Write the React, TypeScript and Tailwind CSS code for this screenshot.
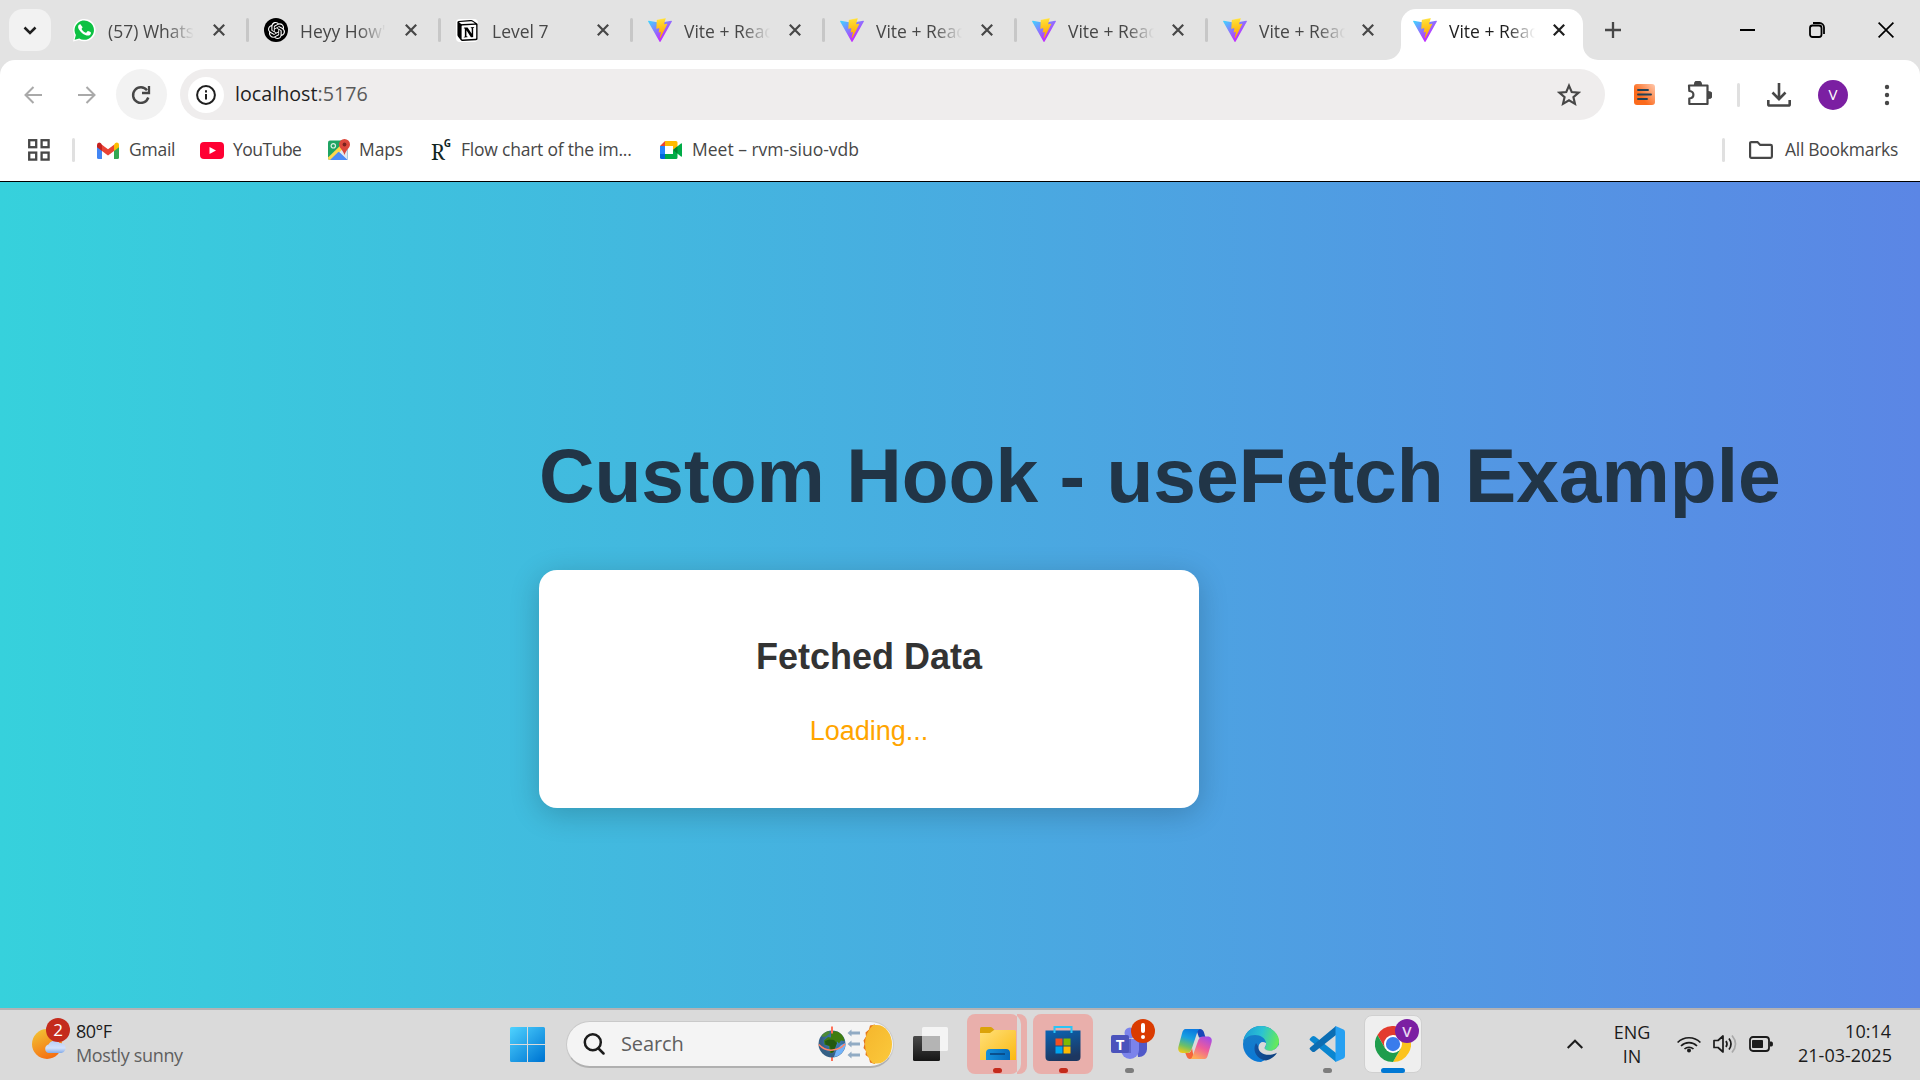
import React from "react";
import { SiOpenai, SiNotion } from "react-icons/si";

const ViteLogo = ({ id }: { id: string }) => (
  <svg viewBox="0 0 256 257" className="h-6 w-6 shrink-0">
    <defs>
      <linearGradient id={id + "a"} x1="-.828%" x2="57.636%" y1="7.652%" y2="78.411%">
        <stop offset="0%" stopColor="#41D1FF" />
        <stop offset="100%" stopColor="#BD34FE" />
      </linearGradient>
      <linearGradient id={id + "b"} x1="43.376%" x2="50.316%" y1="2.242%" y2="89.03%">
        <stop offset="0%" stopColor="#FFEA83" />
        <stop offset="8.333%" stopColor="#FFDD35" />
        <stop offset="100%" stopColor="#FFA800" />
      </linearGradient>
    </defs>
    <path fill={`url(#${id}a)`} d="M255.153 37.938L134.897 252.976c-2.483 4.44-8.862 4.466-11.382.048L.875 37.958c-2.746-4.814 1.371-10.646 6.827-9.67l120.385 21.517a6.537 6.537 0 0 0 2.322-.004l117.867-21.483c5.438-.991 9.574 4.796 6.877 9.62Z" />
    <path fill={`url(#${id}b)`} d="M185.432.063L96.44 17.501a3.268 3.268 0 0 0-2.634 3.014l-5.474 92.456a3.268 3.268 0 0 0 3.997 3.378l24.777-5.718c2.318-.535 4.413 1.507 3.936 3.838l-7.361 36.047c-.495 2.426 1.782 4.5 4.151 3.78l15.304-4.649c2.372-.72 4.652 1.36 4.15 3.788l-11.698 56.621c-.732 3.542 3.979 5.473 5.943 2.437l1.313-2.028l72.516-144.72c1.215-2.423-.88-5.186-3.54-4.672l-25.505 4.922c-2.396.462-4.435-1.77-3.759-4.114l16.646-57.705c.677-2.35-1.37-4.583-3.769-4.113Z" />
  </svg>
);

const CloseX = () => (
  <svg viewBox="0 0 12 12" className="h-3 w-3 shrink-0" fill="none" stroke="currentColor" strokeWidth="2.2">
    <path d="M.8.8l10.4 10.4M11.2.8L.8 11.2" />
  </svg>
);

const WhatsApp = () => (
  <span className="flex h-6 w-6 shrink-0 items-center justify-center">
    <svg viewBox="0 0 24 24" className="h-6 w-6">
      <path d="M1 23.4l1.6-5.9A11.2 11.2 0 1 1 7 21.9z" fill="#fff" />
      <path d="M2.6 21.7l1.3-4.6A9.7 9.7 0 1 1 7.3 20.5z" fill="#0dc143" />
      <path d="M8.9 6.9c-.3-.6-.5-.6-.8-.6-.9 0-2 1-2 2.600 0 1.500 1.100 3 1.300 3.200.2.2 2.200 3.500 5.400 4.700 2.700 1 3.200.8 3.800.7.6 0 1.900-.7 2.100-1.500.3-.7.3-1.400.2-1.500-.2-.3-2.500-1.400-2.900-1.400-.2 0-.4 0-.7.4l-.9 1.100c-.2.200-.4.2-.7.100-2.300-1-3.500-2.600-4-3.500-.2-.3 0-.5.1-.7l.7-.9c.2-.3.1-.5 0-.7z" fill="#fff" />
    </svg>
  </span>
);

const ChatGpt = () => (
  <span className="flex h-6 w-6 shrink-0 items-center justify-center rounded-full bg-black text-white">
    <SiOpenai size={17} />
  </span>
);

const Notion = () => (
  <span className="flex h-6 w-6 shrink-0 items-center justify-start text-black">
    <span className="flex h-[23px] w-[22px] items-center justify-center rounded-[4px] bg-white">
      <SiNotion size={21} />
    </span>
  </span>
);

type TabInfo = { title: string; icon: React.ReactNode; sep?: boolean; w?: string; gap?: string };
const tabs: TabInfo[] = [
  { title: "(57) WhatsApp", icon: <WhatsApp />, sep: true },
  { title: "Heyy How's", icon: <ChatGpt />, sep: true },
  { title: "Level 7", icon: <Notion />, sep: true },
  { title: "Vite + React", icon: <ViteLogo id="v1" />, sep: true },
  { title: "Vite + React", icon: <ViteLogo id="v2" />, sep: true },
  { title: "Vite + React", icon: <ViteLogo id="v3" />, sep: true, w: "w-[191px]", gap: "ml-[12px]" },
  { title: "Vite + React", icon: <ViteLogo id="v4" />, w: "w-[193px]", gap: "ml-[11px]" },
];

const fade = "[mask-image:linear-gradient(to_right,#000_58px,transparent_86px)]";

const Tab = ({ t }: { t: TabInfo }) => (
  <div className={`flex h-full shrink-0 items-center pl-[15px] text-[#474747] ${t.w ?? "w-[192px]"}`}>
    {t.icon}
    <span className={`ml-3 mt-[2px] w-[92px] shrink-0 overflow-hidden text-[17.5px] leading-6 whitespace-nowrap ${fade}`}>{t.title}</span>
    <span className={t.gap ?? "ml-[13px]"}><CloseX /></span>
    {t.sep && <span className="ml-auto h-6 w-[3px] rounded-sm bg-[#c7c7c7]" />}
  </div>
);

const TabStrip = () => (
  <div className="flex h-[60px] bg-[#e3e3e3] text-[#474747]">
    <div className="mt-[9px] ml-[9px] flex h-[42px] w-[42px] shrink-0 items-center justify-center rounded-[14px] bg-[#f2f2f2] text-[#1f1f1f]">
      <svg viewBox="0 0 14 9" className="h-[9px] w-[14px]" fill="none" stroke="currentColor" strokeWidth="2.5">
        <path d="M1.500 1.500L7 7l5.500-5.500" />
      </svg>
    </div>
    <div className="ml-[6px] flex">
      {tabs.map((t, i) => <Tab key={i} t={t} />)}
    </div>
    <div className="relative mt-[9px] flex w-[182px] shrink-0 items-center rounded-t-[15px] bg-white pb-[9px] pl-3 text-[#1f1f1f]">
      <svg viewBox="0 0 15 15" className="absolute -left-[15px] bottom-0 h-[15px] w-[15px]"><path d="M15 0v15H0A15 15 0 0 0 15 0z" fill="#fff" /></svg>
      <svg viewBox="0 0 15 15" className="absolute -right-[15px] bottom-0 h-[15px] w-[15px]"><path d="M0 0v15h15A15 15 0 0 1 0 0z" fill="#fff" /></svg>
      <ViteLogo id="v5" />
      <span className={`ml-3 mt-[2px] w-[88px] shrink-0 overflow-hidden text-[17.5px] leading-6 whitespace-nowrap ${fade}`}>Vite + React</span>
      <span className="ml-[16px]"><CloseX /></span>
    </div>
    <div className="ml-[22px] flex h-[60px] w-4 items-center">
      <svg viewBox="0 0 16 16" className="h-4 w-4" stroke="currentColor" strokeWidth="2.300"><path d="M8 0v16M0 8h16" /></svg>
    </div>
    <div className="ml-auto flex h-[59px] items-center text-black">
      <svg viewBox="0 0 16 16" className="mr-[53px] h-4 w-4" stroke="currentColor" strokeWidth="2"><path d="M0 8h15" /></svg>
      <svg viewBox="0 0 16 16" className="mr-[53px] h-4 w-4" fill="none" stroke="currentColor" strokeWidth="1.800">
        <rect x="1" y="3.500" width="11.500" height="11.500" rx="2.500" />
        <path d="M4 1h6.500A4.500 4.500 0 0 1 15 5.500V12" />
      </svg>
      <svg viewBox="0 0 16 16" className="mr-[26px] h-4 w-4" stroke="currentColor" strokeWidth="1.700"><path d="M.6.6l14.800 14.800M15.400.6L.6 15.400" /></svg>
    </div>
  </div>
);

const Toolbar = () => (
  <div className="flex h-[60px] items-center pt-[9px] text-[#474747]">
    <svg viewBox="0 0 18 18" className="ml-6 h-[18px] w-[18px] shrink-0 text-[#a9a9a9]" fill="none" stroke="currentColor" strokeWidth="2"><path d="M18 9H2M9.500 1L1.500 9l8 8" /></svg>
    <svg viewBox="0 0 18 18" className="ml-9 h-[18px] w-[18px] shrink-0 text-[#a9a9a9]" fill="none" stroke="currentColor" strokeWidth="2"><path d="M0 9h16M8.500 1l8 8-8 8" /></svg>
    <div className="ml-5 flex h-[51px] w-[51px] shrink-0 items-center justify-center rounded-full bg-[#f2f2f2] pr-[2px]">
      <svg viewBox="0 0 20 20" className="h-5 w-5" fill="none" stroke="currentColor" strokeWidth="2.400">
        <path d="M17.300 12.500A7.800 7.800 0 1 1 16 5.200" />
        <path d="M18 1v7h-7" strokeWidth="2.300" />
      </svg>
    </div>
    <div className="ml-[13px] flex h-[51px] w-[1425px] shrink-0 items-center rounded-full bg-[#efeded] pl-2">
      <div className="flex h-9 w-9 items-center justify-center rounded-full bg-white text-[#1f1f1f]">
        <svg viewBox="0 0 20 20" className="h-5 w-5" fill="none" stroke="currentColor" strokeWidth="2">
          <circle cx="10" cy="10" r="8.900" />
          <path d="M10 9v5.500M10 5.300v2.200" />
        </svg>
      </div>
      <span className="mb-[2px] ml-[11px] text-[19.7px] leading-6 text-[#1f1f1f]">localhost<span className="text-[#5a5a5a]">:5176</span></span>
      <svg viewBox="0 0 24 24" className="mr-6 ml-auto h-6 w-6" fill="none" stroke="currentColor" strokeWidth="2.100">
        <path d="M12 2.600l2.700 6.400 6.900.6-5.200 4.500 1.600 6.800-6-3.600-6 3.600 1.600-6.800L2.400 9.600l6.900-.6z" />
      </svg>
    </div>
    <svg viewBox="0 0 21 21" className="ml-[29px] h-[21px] w-[21px] shrink-0">
      <defs>
        <linearGradient id="ext" x1="1" y1="0" x2=".3" y2=".6"><stop offset="0" stopColor="#ffc9ae" /><stop offset="1" stopColor="#fb6a1c" /></linearGradient>
      </defs>
      <rect width="21" height="21" rx="3" fill="url(#ext)" />
      <path d="M4 6h10M4 10.500h13M4 15h9" stroke="#234155" strokeWidth="1.900" strokeLinecap="round" />
    </svg>
    <svg viewBox="0 0 25 25" className="mb-[2px] ml-[32px] h-[25px] w-[25px] shrink-0" fill="none" stroke="currentColor" strokeWidth="2.200">
      <path d="M2 4.500h18.500v18.500H2.300v-5.500c2.700-.3 4.100-1.800 4.100-3.800s-1.400-3.400-4.100-3.700z" strokeLinejoin="round" />
      <path d="M8 3.500a3 3 0 0 1 6 0zM21.500 11a3 3 0 0 1 0 6z" fill="currentColor" />
    </svg>
    <span className="ml-[25px] h-6 w-[3px] shrink-0 rounded-sm bg-[#e0e0e0]" />
    <svg viewBox="0 0 24 24" className="ml-[27px] h-6 w-6 shrink-0" fill="none" stroke="currentColor" strokeWidth="2.600">
      <path d="M12 0v16M5.500 9.500L12 16.200l6.500-6.700M1.300 17v4.200q0 1.300 1.300 1.300h18.800q1.300 0 1.300-1.300V17" />
    </svg>
    <span className="ml-[27px] flex h-[30px] w-[30px] shrink-0 items-center justify-center rounded-full bg-[#7b1fa2] text-[15px] text-white">V</span>
    <svg viewBox="0 0 6 22" className="ml-[36px] h-[22px] w-[6px] shrink-0" fill="currentColor"><circle cx="3" cy="3" r="2.200" /><circle cx="3" cy="11" r="2.200" /><circle cx="3" cy="19" r="2.200" /></svg>
  </div>
);

const Bookmarks = () => (
  <div className="flex h-[60px] items-center text-[17.5px] leading-6 whitespace-nowrap text-[#474747]">
    <svg viewBox="0 0 22 22" className="ml-7 h-[22px] w-[22px] shrink-0" fill="none" stroke="currentColor" strokeWidth="2.300">
      <rect x="1.200" y="1.200" width="7" height="7" /><rect x="13.600" y="1.200" width="7" height="7" />
      <rect x="1.200" y="13.600" width="7" height="7" /><rect x="13.600" y="13.600" width="7" height="7" />
    </svg>
    <span className="ml-[22px] h-6 w-[3px] shrink-0 rounded-sm bg-[#e0e0e0]" />
    <svg viewBox="0 0 22 17" className="ml-[22px] h-[17px] w-[22px] shrink-0">
      <path d="M0 3h5v14H1.500Q0 17 0 15.500z" fill="#4285f4" />
      <path d="M17 3h5v12.500q0 1.500-1.500 1.500H17z" fill="#34a853" />
      <path d="M17 2.500Q19-.5 21.300 1q.7.8.7 2v2.300L17 9z" fill="#fbbc04" />
      <path d="M5 2.800l6 4.500 6-4.500V9l-6 4.500L5 9z" fill="#ea4335" />
      <path d="M0 3Q0 .5 2.200.4 3.500.4 5 2.500V9L0 5.300z" fill="#c5221f" />
    </svg>
    <span className="mb-[2px] ml-[10px] w-[71px] tracking-[-0.25px]">Gmail</span>
    <svg viewBox="0 0 24 17" className="h-[17px] w-6 shrink-0"><rect width="24" height="17" rx="4" fill="#ff0033" /><path d="M9.500 5l6.500 3.500-6.500 3.500z" fill="#fff" /></svg>
    <span className="mb-[2px] ml-[9px] w-[95px] tracking-[-0.5px]">YouTube</span>
    <svg viewBox="0 0 22 22" className="h-[22px] w-[22px] shrink-0">
      <rect x="0" y="1.500" width="19.500" height="19.500" rx="2" fill="#1fa463" />
      <path d="M1 20.500L19.500 2v19H2z" fill="#4c8bf5" />
      <path d="M10.500 12.500l8.500 8h.5V9l-4-2z" fill="#e3e8ee" />
      <path d="M0 18.500L16 3l2 3.500L4 21H2q-2 0-2-2z" fill="#ffd84b" />
      <path d="M2 21l8.500-8.300L19 21z" fill="#4c8bf5" />
      <circle cx="5.300" cy="6.800" r="2.200" fill="none" stroke="#d8efe2" strokeWidth="1.200" />
      <path d="M16.500 0a5.500 5.500 0 0 1 5.500 5.500c0 3.500-4 5.300-5.500 10.500C15 10.800 11 9 11 5.500A5.500 5.500 0 0 1 16.500 0z" fill="#dc483c" />
      <circle cx="16.500" cy="5.500" r="1.900" fill="#7b231e" />
    </svg>
    <span className="mb-[2px] ml-[9px] w-[72px] tracking-[-0.1px]">Maps</span>
    <span className="flex h-6 w-[20px] shrink-0 font-['Noto_Serif','Liberation_Serif',serif] leading-none text-[#11251f]">
      <span className="mt-[4px] text-[21px]">R</span>
      <span className="-ml-px font-sans text-[10px] font-bold">G</span>
    </span>
    <span className="mb-[2px] ml-[10px] w-[199px] tracking-[-0.22px]">Flow chart of the im...</span>
    <svg viewBox="0 0 22 18" className="h-[18px] w-[22px] shrink-0">
      <path d="M0 5h5v8H0z" fill="#2684fc" />
      <path d="M0 5l5-5v5z" fill="#ea4335" />
      <path d="M5 0h11q1.500 0 1.500 1.500V7L13 9V5H5z" fill="#ffba00" />
      <path d="M0 13h5v5H1.500Q0 18 0 16.500z" fill="#0066da" />
      <path d="M5 13h8V9l4.500 2v5.500q0 1.500-1.500 1.500H5z" fill="#00ac47" />
      <path d="M13 9l8-6.500q1-.5 1 .5v12q0 1-1 .5z" fill="#00ac47" />
      <path d="M13 9l4.500-3.700v7.400z" fill="#00832d" />
    </svg>
    <span className="mb-[2px] ml-[10px]">Meet – rvm-siuo-vdb</span>
    <span className="ml-auto h-6 w-[3px] shrink-0 rounded-sm bg-[#e0e0e0]" />
    <svg viewBox="0 0 24 18" className="ml-[24px] h-[18px] w-6 shrink-0" fill="none" stroke="currentColor" strokeWidth="2.200">
      <path d="M2.300 1.100h6.200l2.700 2.800h10.400q1.300 0 1.300 1.300v10.400q0 1.300-1.300 1.300H2.400q-1.300 0-1.300-1.300V2.300q0-1.200 1.200-1.200z" />
    </svg>
    <span className="mb-[2px] ml-3 w-[135px] tracking-[-0.28px]">All Bookmarks</span>
  </div>
);

const TaskIcon = ({ children, box = "", dot }: { children: React.ReactNode; box?: string; dot?: string }) => (
  <div className={`relative mr-[6px] flex h-[60px] w-[60px] shrink-0 items-center justify-center rounded-lg ${box}`}>
    {children}
    {dot && <span className={`absolute bottom-[1px] h-[5px] rounded-full ${dot}`} />}
  </div>
);

const Explorer = () => (
  <svg viewBox="0 0 36 34" className="ml-[-2px] h-[34px] w-9">
    <defs><linearGradient id="fo" x1="0" y1="0" x2="1" y2="1"><stop offset="0" stopColor="#ffe07a" /><stop offset="1" stopColor="#fbb911" /></linearGradient>
      <linearGradient id="fb" x1="0" y1="0" x2="1" y2="0"><stop offset="0" stopColor="#1792dc" /><stop offset="1" stopColor="#0669ba" /></linearGradient></defs>
    <path d="M0 1.500Q0 0 1.500 0h9q1 0 2 1l2.500 2.500V8H0z" fill="#dba30a" />
    <path d="M0 6h10l4-3h20.500Q36 3 36 4.500V33H0z" fill="url(#fo)" />
    <path d="M6 33v-7q0-4 4-4h16q4 0 4 4v7z" fill="url(#fb)" />
    <path d="M10 27h15" stroke="#0a4a86" strokeWidth="1.800" />
  </svg>
);

const Store = () => (
  <svg viewBox="0 0 36 36" className="h-9 w-9">
    <defs><linearGradient id="st" x1="0" y1="0" x2=".3" y2="1"><stop offset="0" stopColor="#0a64b4" /><stop offset="1" stopColor="#1d3760" /></linearGradient></defs>
    <path d="M.5 4.500h35V31q0 4-4 4h-27q-4 0-4-4z" fill="url(#st)" />
    <path d="M9.500 7V1h17v6" fill="none" stroke="#2bc4f6" strokeWidth="2" />
    <path d="M10.500 12.500h7v7h-7z" fill="#f25022" /><path d="M18.500 12.500h7v7h-7z" fill="#7fba00" />
    <path d="M10.500 20.500h7v7h-7z" fill="#00a4ef" /><path d="M18.500 20.500h7v7h-7z" fill="#ffb900" />
  </svg>
);

const Teams = () => (
  <svg viewBox="0 0 36 36" className="h-9 w-9">
    <circle cx="19" cy="7" r="5.500" fill="#7b83eb" />
    <path d="M24 13h12v10a8 8 0 0 1-9 8z" fill="#5059c9" />
    <path d="M10 13h18v11a9 9 0 0 1-18 0z" fill="#7b83eb" />
    <path d="M10 13h10v14H11z" fill="#4a52b5" opacity=".6" />
    <rect x="0" y="9" width="18" height="18" rx="2" fill="#4b53bc" />
    <text x="9" y="23.500" textAnchor="middle" fill="#fff" className="font-['Open_Sans',sans-serif] text-[15px] font-bold">T</text>
  </svg>
);

const Copilot = () => (
  <svg viewBox="0 0 36 36" className="h-9 w-9">
    <defs>
      <linearGradient id="c1" x1=".5" y1="0" x2=".2" y2="1"><stop offset="0" stopColor="#0b7be0" /><stop offset=".35" stopColor="#19a0e0" /><stop offset=".7" stopColor="#6dc067" /><stop offset="1" stopColor="#f5c914" /></linearGradient>
      <linearGradient id="c2" x1=".8" y1="0" x2=".3" y2="1"><stop offset="0" stopColor="#a34be8" /><stop offset=".5" stopColor="#ee5c9a" /><stop offset="1" stopColor="#ffae55" /></linearGradient>
    </defs>
    <path d="M19 3h4q3 0 4 3.500l1.500 5H22z" fill="#1846b8" />
    <path d="M8.500 3H23q-2 .5-3 4l-5 15q-1.500 5-5 5H5.500C2 27 .5 24 1.500 20.500L5 7.500Q6 3 8.500 3z" fill="url(#c1)" />
    <path d="M17 33h-4q-2.500 0-3.500-3l-1.200-3H11q3 0 4-5z" fill="#f4663a" />
    <path d="M27.500 33H13q2-.5 3-4l5-14q1.500-4.500 5-4.500h4.500C34 10.500 35.500 13 34.500 16.500L31 28.500q-1 4.500-3.500 4.500z" fill="url(#c2)" />
  </svg>
);

const Edge = () => (
  <svg viewBox="0 0 36 36" className="h-9 w-9">
    <defs>
      <linearGradient id="e1" x1="0" y1=".3" x2="1" y2=".5"><stop offset="0" stopColor="#1c9bd8" /><stop offset=".5" stopColor="#2bc3d2" /><stop offset="1" stopColor="#66eb58" /></linearGradient>
      <linearGradient id="e2" x1=".3" y1="0" x2=".4" y2="1"><stop offset="0" stopColor="#1b7fc4" /><stop offset="1" stopColor="#0a78d6" /></linearGradient>
      <linearGradient id="e3" x1="0" y1=".4" x2="1" y2=".6"><stop offset="0" stopColor="#11529f" /><stop offset="1" stopColor="#0d3f7d" /></linearGradient>
    </defs>
    <circle cx="18" cy="18" r="18" fill="url(#e2)" />
    <path d="M36 18L30 36 18 36 36 27z" fill="#dadada" />
    <path d="M13 17c-4 7 0 16 10 17.500 4.500-1 8-3.500 10.500-7 .5-1-.3-1.300-1-.8-7 3.300-16 1.300-17-6z" fill="url(#e3)" />
    <path d="M0 17C1 7 8.500 0 18 0s18 7.500 18 15c0 6-4.500 9.500-9 9.500-3 0-6-1-5.500-2.500.5-1 2-2 1.500-5C22.500 12 17.500 9 12 9 6 9 1 12.500 0 17z" fill="url(#e1)" />
    <path d="M23 17c.3 3-1.500 4-1.500 5 0 1.500 2.500 2.500 5.500 2.500 4 0 7-2.300 8.300-5.500L36 26l-2.800 1c-.7.500-4 1.800-7.200 1.800-7 0-10.800-3.800-10.500-7.800.3-4 3.500-6.500 7.500-4z" fill="#dadada" />
    <path d="M22 24c4 2 10 1.500 13.300-5L36 15c0 6-4.500 9.500-9 9.500-2 0-4 0-5-.5z" fill="#61e35f" />
  </svg>
);

const VsCode = () => (
  <svg viewBox="0 0 36 36" className="h-9 w-9">
    <path d="M1 12.500l2-2q1.500-1 3 0L27 27v9L1.200 14.500Q0 13.500 1 12.500z" fill="#0a86d0" />
    <path d="M1 23.500l2 2q1.500 1 3 0L27 9V0L1.200 21.500Q0 22.500 1 23.500z" fill="#0b6db3" />
    <path d="M26.500 0l8 3.500Q36 4.300 36 6v24q0 1.700-1.500 2.500l-8 3.500z" fill="#26a0f2" />
  </svg>
);

const Chrome = () => (
  <svg viewBox="0 0 48 48" className="h-9 w-9">
    <circle cx="24" cy="24" r="24" fill="#fff" />
    <path d="M24 12h20.800A24 24 0 0 0 3.200 12l10.400 18z" fill="#e33b2e" />
    <path d="M34.400 30L24 48a24 24 0 0 0 20.800-36H24z" fill="#fcc31e" />
    <path d="M13.600 30L3.200 12A24 24 0 0 0 24 48l10.400-18z" fill="#1f9d4d" />
    <circle cx="24" cy="24" r="12" fill="#fff" />
    <circle cx="24" cy="24" r="9.500" fill="#3a7cec" />
  </svg>
);

const SearchBox = () => (
  <div className="mr-[18px] ml-[21px] flex h-[47px] w-[328px] shrink-0 items-center overflow-hidden rounded-full border border-b-2 border-[#c9c9c9] border-b-[#b0b0b0] bg-[#f4f4f4]">
    <svg viewBox="0 0 22 22" className="ml-4 h-[22px] w-[22px]" fill="none" stroke="#1b1b1b" strokeWidth="2.500" strokeLinecap="round">
      <circle cx="9.800" cy="9.300" r="8" /><path d="M15.500 15.500l5 5" />
    </svg>
    <span className="ml-4 text-[20px] leading-7 tracking-[-0.1px] text-[#5f5f5f]">Search</span>
    <svg viewBox="0 0 76 42" className="ml-auto h-[42px] w-[76px]">
      <defs>
        <radialGradient id="gl" cx=".6" cy=".4"><stop offset="0" stopColor="#3f86cc" /><stop offset="1" stopColor="#345f85" /></radialGradient>
        <linearGradient id="su" x1="0" y1="0" x2="1" y2="1"><stop offset="0" stopColor="#f5b62c" /><stop offset="1" stopColor="#fbc93c" /></linearGradient>
      </defs>
      <path d="M15 4v34" stroke="#ff7058" strokeWidth="2" />
      <circle cx="15" cy="21" r="13.500" fill="url(#gl)" />
      <path d="M17 34a13.500 13.500 0 0 0 11.400-14L24 22l-5 6z" fill="#72b3fa" />
      <path d="M4.500 12.500Q8 8.500 12 8l1 2-4 3.500-3.500.5z" fill="#4c8a35" />
      <path d="M14 9q6-2 9.500 1.500 3.500 3 4 7.500l-3.500-.5-2 3-2-2-1 4-3 7-3 .5-1-7-4.500-1.500-.5-4 4-3.500 3 .5z" fill="#3f7d10" />
      <path d="M8 18l4-1.500 5 .5 3 3-3.500 9-2.500.8-1-6.800-4.500-1.500z" fill="#23590f" />
      <path d="M1.800 21.500q6 6.500 14 5.500t12-6" fill="none" stroke="#ff8468" strokeWidth="1.500" />
      <path d="M15 3.500v7" stroke="#ff7058" strokeWidth="2" />
      <g fill="#91abc4">
        <path d="M30.500 10l4-3.500v2H43v3h-8.500v2z" /><path d="M30.500 21l4-3.500v2H43v3h-8.500v2z" /><path d="M30.500 32l4-3.500v2H43v3h-8.500v2z" />
      </g>
      <path d="M58 1.500l-5 1-1 4-3.500 3 .5 4-2.500 4 1 3.500-1 4 2.500 3-.5 4 3.500 2.500 1 5 5 1.500z" fill="#e5761b" />
      <path d="M56 2h4a15 19.300 0 0 1 0 38.600h-4q-8-8-8-19.500T56 2z" fill="url(#su)" />
    </svg>
  </div>
);

const Taskbar = () => (
  <div className="flex h-[72px] items-center border-t-2 border-[#b4b2b4] bg-[#dadada] pb-[2px] text-[18px] leading-6 text-[#1b1b1b]">
    <div className="mb-[9px] ml-[32px] shrink-0">
      <div className="relative h-[46px] w-[38px]">
        <svg viewBox="0 0 38 46" className="h-[46px] w-[38px]">
          <defs><linearGradient id="sn" x1=".2" y1="0" x2=".7" y2="1"><stop offset="0" stopColor="#f2c234" /><stop offset="1" stopColor="#f56a10" /></linearGradient>
            <linearGradient id="cl" x1="0" y1="0" x2="0" y2="1"><stop offset="0" stopColor="#b7cdf6" /><stop offset=".6" stopColor="#d3e2fb" /><stop offset="1" stopColor="#84abe8" /></linearGradient></defs>
          <circle cx="15" cy="27" r="15" fill="url(#sn)" />
          <path d="M16 36a4.500 4.500 0 0 1 .5-8.500 6.500 6.500 0 0 1 11-1.500 5 5 0 0 1 2 10z" fill="url(#cl)" />
        </svg>
        <span className="absolute top-[1px] left-[14px] flex h-6 w-6 items-center justify-center rounded-full bg-[#c42b1c] text-[17px] text-white">2</span>
      </div>
    </div>
    <div className="mb-[2px] ml-[6px] w-[433px] shrink-0">
      <div className="tracking-[-0.5px]">80°F</div>
      <div className="tracking-[-0.35px] text-[#5f5f5f]">Mostly sunny</div>
    </div>
    <svg viewBox="0 0 35 35" className="ml-[1px] h-[35px] w-[35px] shrink-0">
      <defs><linearGradient id="wi" gradientUnits="userSpaceOnUse" x1="0" y1="0" x2="30" y2="35"><stop offset="0" stopColor="#4fd3ff" /><stop offset="1" stopColor="#0078d4" /></linearGradient></defs>
      <path d="M1.500 0H17v17H0V1.500Q0 0 1.500 0zM18 0h15.500Q35 0 35 1.500V17H18zM0 18h17v17H1.500Q0 35 0 33.500zM18 18h17v15.500q0 1.500-1.500 1.500H18z" fill="url(#wi)" />
    </svg>
    <SearchBox />
    <svg viewBox="0 0 37 34" className="h-[34px] w-[37px] shrink-0">
      <defs><linearGradient id="tv" x1="0" y1="0" x2="0" y2="1"><stop offset="0" stopColor="#4a4a4a" /><stop offset="1" stopColor="#151515" /></linearGradient></defs>
      <rect x="1" y="9" width="27" height="25" rx="1.500" fill="url(#tv)" />
      <rect x="10" y="0" width="26" height="24" rx="1.500" fill="#f4f4f4" />
      <path d="M10 9h18v15H10z" fill="#b4b4b4" />
    </svg>
    <div className="ml-[18px] flex">
      <div className="mr-[6px] flex w-[60px] shrink-0">
        <div className="relative flex h-[60px] w-[52px] items-center justify-center rounded-lg bg-[#e9afab]">
          <div className="ml-[12px]"><Explorer /></div>
          <span className="absolute bottom-[1px] left-[26px] h-[5px] w-[9px] rounded-full bg-[#c42b1c]" />
        </div>
        <div className="relative ml-[-2px] h-[60px] w-[10px] overflow-hidden">
          <span className="absolute -left-4 top-0 h-[60px] w-[26px] rounded-lg bg-[#e9afab]" />
          <span className="absolute -left-4 top-0 h-[60px] w-[20px] rounded-xl bg-[#dadada]" />
        </div>
      </div>
      <TaskIcon box="bg-[#e9afab]" dot="w-[9px] bg-[#c42b1c]"><Store /></TaskIcon>
      <TaskIcon dot="w-[9px] bg-[#7d7d7d]">
        <Teams />
        <span className="absolute top-[5px] right-[4px] flex h-6 w-6 flex-col items-center justify-center gap-[2px] rounded-full bg-[#da3b01]">
          <span className="h-[10px] w-[4px] rounded-full bg-white" /><span className="h-[4px] w-[4px] rounded-full bg-white" />
        </span>
      </TaskIcon>
      <TaskIcon><Copilot /></TaskIcon>
      <TaskIcon><Edge /></TaskIcon>
      <TaskIcon dot="w-[9px] bg-[#7d7d7d]"><VsCode /></TaskIcon>
      <TaskIcon dot="w-6 bg-[#0078d4]">
        <span className="absolute inset-[1px] rounded-lg border border-[#d0d0d0] bg-[#efefef]" />
        <span className="relative"><Chrome /></span>
        <span className="absolute top-[5px] right-[4px] flex h-6 w-6 items-center justify-center rounded-full bg-[#7b1fa2] text-[15px] font-semibold text-[#ead6f2]">V</span>
      </TaskIcon>
    </div>
    <svg viewBox="0 0 16 10" className="ml-auto h-[10px] w-4 shrink-0" fill="none" stroke="currentColor" strokeWidth="2"><path d="M.7 9L8 1.700 15.300 9" /></svg>
    <div className="ml-[26px] w-[46px] shrink-0 text-center"><div>ENG</div><div>IN</div></div>
    <svg viewBox="0 0 24 18" className="ml-[22px] h-[18px] w-6 shrink-0" fill="none" stroke="currentColor" strokeWidth="1.700">
      <path d="M.6 7.500a16 16 0 0 1 22.800 0M4 11a11.300 11.300 0 0 1 16 0M7.500 14a6.600 6.600 0 0 1 9 0" />
      <circle cx="12" cy="15.500" r="2" fill="currentColor" stroke="none" />
    </svg>
    <svg viewBox="0 0 25 20" className="ml-3 h-5 w-[25px] shrink-0" fill="none" stroke="currentColor" strokeWidth="1.700" strokeLinejoin="round">
      <path d="M1 6.500h4L10 2v16l-5-4.500H1z" />
      <path d="M13 7q2 3 0 6M16 4.500q4 5.500 0 11" />
      <path d="M19 1.500q7 8.500 0 17" stroke="#a9a9a9" />
    </svg>
    <svg viewBox="0 0 24 16" className="ml-[11px] h-4 w-6 shrink-0">
      <rect x="1" y="1" width="19" height="14" rx="3" fill="none" stroke="currentColor" strokeWidth="1.800" />
      <rect x="3" y="4" width="11" height="8" rx=".8" fill="currentColor" />
      <path d="M21 5.500h1.500q1.500 0 1.500 2.500t-1.500 2.500H21z" fill="currentColor" />
    </svg>
    <div className="mr-[29px] mb-[2px] ml-[25px] w-[93px] shrink-0 text-right whitespace-nowrap"><div>10:14</div><div>21-03-2025</div></div>
  </div>
);

export default function App() {
  return (
    <div className="flex h-[1080px] w-[1920px] flex-col overflow-hidden font-['Open_Sans','Noto_Sans',sans-serif]">
      <TabStrip />
      <div className="h-[122px] shrink-0 bg-[#e3e3e3]">
        <div className="h-full rounded-t-[15px] border-b border-black bg-white">
          <Toolbar />
          <Bookmarks />
        </div>
      </div>
      <main className="h-[826px] shrink-0 bg-[linear-gradient(to_right,#36d1dc,#5b86e5)] pl-[539px] font-['Liberation_Sans',Arial,sans-serif]">
        <h1 className="pt-[250px] text-[76.8px] leading-[86px] font-bold whitespace-nowrap text-[#213547]">Custom Hook - useFetch Example</h1>
        <section className="mt-[52px] flex h-[238px] w-[660px] flex-col items-center rounded-[18px] bg-white shadow-[0_6px_30px_rgba(0,0,0,0.2)]">
          <h2 className="mt-[66px] text-[36px] leading-[42px] font-bold text-[#333]">Fetched Data</h2>
          <p className="mt-[37px] text-[27px] leading-[32px] text-[#ffa500]">Loading...</p>
        </section>
      </main>
      <Taskbar />
    </div>
  );
}
